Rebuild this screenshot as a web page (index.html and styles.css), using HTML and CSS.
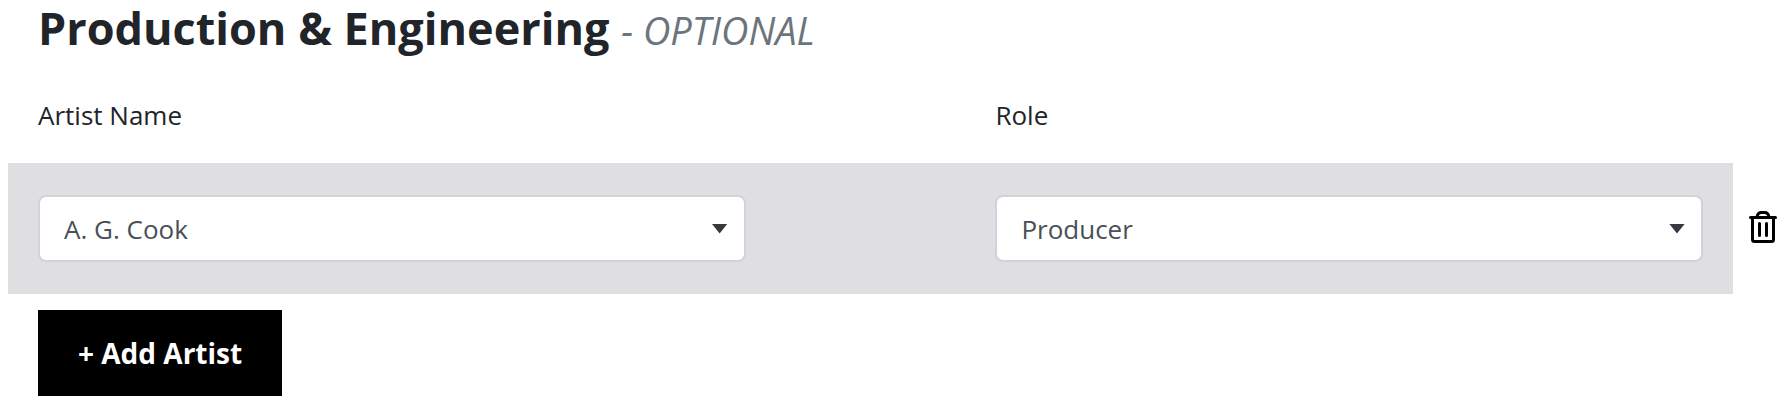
FILE: index.html
```html
<!DOCTYPE html>
<html lang="en">
<head>
    <meta charset="UTF-8">
    <meta name="viewport" content="width=device-width, initial-scale=1.0">
    <title>Production &amp; Engineering</title>
    <link rel="stylesheet" href="styles.css">
</head>
<body>
    <form class="credits">
        <h2 class="title">Production &amp; Engineering <span class="optional">- OPTIONAL</span></h2>
        <div class="fields labels">
            <label for="artistName">Artist Name</label>
            <label for="role">Role</label>
        </div>
        <div class="artist">
            <div class="fields artist-row">
                <div class="select-box">
                    <select id="artistName">
                        <option>A. G. Cook</option>
                    </select>
                </div>
                <div class="select-box">
                    <select id="role">
                        <option>Producer</option>
                    </select>
                </div>
            </div>
            <button type="button" class="delete" aria-label="Remove artist">
                <svg width="28" height="32" viewBox="0 0 28 32" fill="none" stroke="#000" stroke-width="3" stroke-linecap="round" stroke-linejoin="round">
                    <path d="M1.5 6.5h25"/>
                    <path d="M8 6c.4-2.6 2-4.5 4.5-4.5h3c2.500 0 4.100 1.900 4.500 4.500"/>
                    <path d="M3.5 6.5v22a2 2 0 0 0 2 2h17a2 2 0 0 0 2-2v-22"/>
                    <path d="M10.5 12.5v12M17.5 12.5v12"/>
                </svg>
            </button>
        </div>
        <button type="button" class="add">+ Add Artist</button>
    </form>
</body>
</html>
```
FILE: styles.css
```css
body {
    margin: 0;
    background-color: #fff;
    color: #212529;
    font-family: "Open Sans", "Noto Sans", sans-serif;
    font-size: 26px;
    line-height: 40px;
}
.credits {
    padding-left: 8px;
}
.title {
    margin: 0;
    padding: 0 30px;
    font-size: 45px;
    font-weight: 700;
    line-height: 56px;
}
.optional {
    color: #6c757d;
    font-size: 38px;
    font-style: italic;
    font-weight: 400;
}
.fields {
    display: grid;
    grid-template-columns: 1fr 1fr;
    column-gap: 15%;
    padding: 0 30px;
}
.labels {
    margin: 37px 59px 28px 0;
}
.artist {
    display: flex;
    align-items: center;
}
.artist-row {
    flex: 1;
    padding: 32px 30px;
    background-color: #dfdfe1;
}
.select-box {
    display: flex;
    align-items: center;
    border: 2px solid #ced4da;
    border-radius: 8px;
    background-color: #fff;
}
.select-box::after {
    content: "";
    width: 16px;
    height: 10px;
    margin-left: -32px;
    margin-right: 16px;
    background-color: #343a40;
    clip-path: polygon(0 0, 100% 0, 50% 100%);
    pointer-events: none;
}
select {
    flex: 1;
    height: 63px;
    padding: 0 48px 0 24px;
    border: 0;
    border-radius: 8px;
    background: transparent;
    color: #495057;
    font: inherit;
    appearance: none;
}
.delete {
    display: flex;
    padding: 0 15px 3px 16px;
    border: 0;
    background: none;
    cursor: pointer;
}
.add {
    margin: 16px 30px 0;
    padding: 23px 40px;
    border: 0;
    background-color: #000;
    color: #fff;
    font: inherit;
    font-size: 28px;
    font-weight: 700;
    cursor: pointer;
}
```
